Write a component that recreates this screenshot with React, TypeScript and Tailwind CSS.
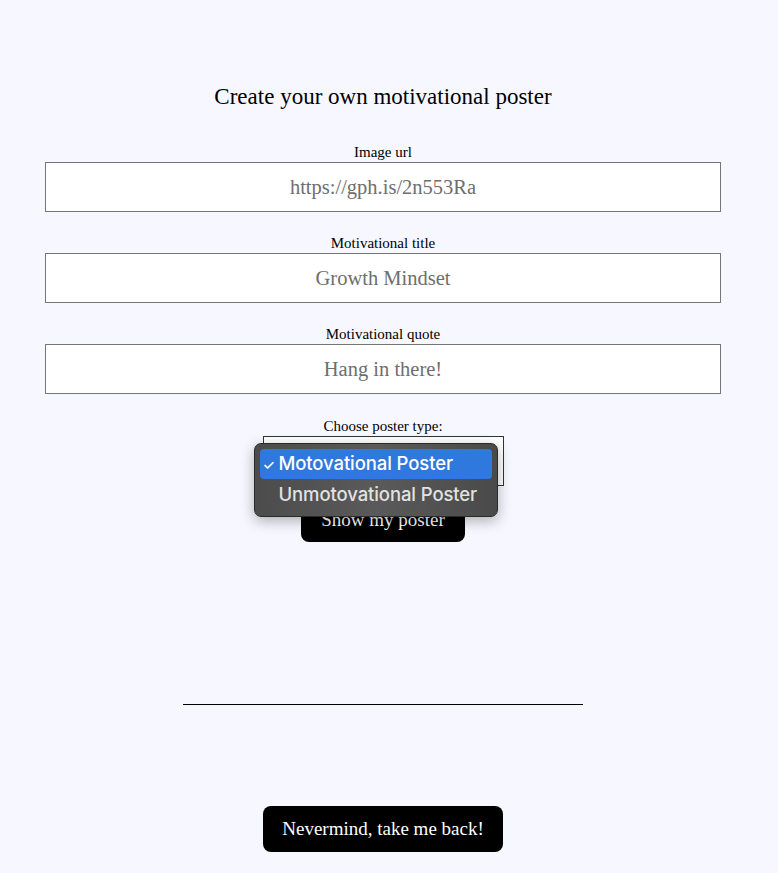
import React from "react";

const serif = { fontFamily: '"Liberation Serif", "DejaVu Serif", serif' };

function Field({ label, placeholder }: { label: string; placeholder: string }) {
  return (
    <div className="flex flex-col items-center w-full">
      <label className="text-[15px] leading-[20px] text-black">{label}</label>
      <input
        placeholder={placeholder}
        className="w-full h-[50px] bg-white border border-[#767676] text-center text-[20.5px] placeholder:text-[#6e6e6e] outline-none"
        style={serif}
      />
    </div>
  );
}

export default function App() {
  return (
    <div className="min-h-[873px] bg-[#f7f7ff] text-black" style={serif}>
      <div className="w-[766px] flex flex-col items-center pt-[82px]">
        <h1 className="text-[23px] leading-[30px] mb-[30px]">Create your own motivational poster</h1>
        <div className="w-[676px] flex flex-col gap-[21px]">
          <Field label="Image url" placeholder="https://gph.is/2n553Ra" />
          <Field label="Motivational title" placeholder="Growth Mindset" />
          <Field label="Motivational quote" placeholder="Hang in there!" />
        </div>
        <div className="mt-[22px] flex flex-col items-center relative">
          <label className="text-[15px] leading-[20px]">Choose poster type:</label>
          <div className="w-[241px] h-[50px] border border-[#333] bg-white flex items-center justify-end pr-[6px] text-[10px]">
            ▾
          </div>
          <button className="mt-[12px] h-[44px] px-[20px] bg-black text-white text-[19px] rounded-[8px]" style={serif}>
            Show my poster
          </button>
          <div
            className="absolute left-[-9px] top-[27px] w-[244px] h-[74px] rounded-[7px] border border-[#2a2a2a] bg-gradient-to-r from-[#4c4c4c] via-[#5a5a5a] to-[#4a4a4a] shadow-[0_4px_14px_rgba(0,0,0,0.3)] px-[5px] pt-[5px]"
            style={{ fontFamily: 'Inter, "Noto Sans", sans-serif' }}
          >
            <div className="h-[30px] rounded-[4px] bg-[#2f78de] flex items-center text-white text-[18.5px] font-medium tracking-[-0.1px]">
              <span className="w-[19px] pl-[3px] text-[14px]">✓</span>
              <span>Motovational Poster</span>
            </div>
            <div className="h-[31px] flex items-center text-[#e2e2e2] text-[18.5px] font-medium tracking-[-0.1px] pl-[19px]">
              Unmotovational Poster
            </div>
          </div>
        </div>
        <div className="mt-[162px] w-[400px] h-px bg-black" />
        <button className="mt-[101px] h-[46px] w-[240px] bg-black text-white text-[19px] rounded-[8px]" style={serif}>
          Nevermind, take me back!
        </button>
      </div>
    </div>
  );
}
